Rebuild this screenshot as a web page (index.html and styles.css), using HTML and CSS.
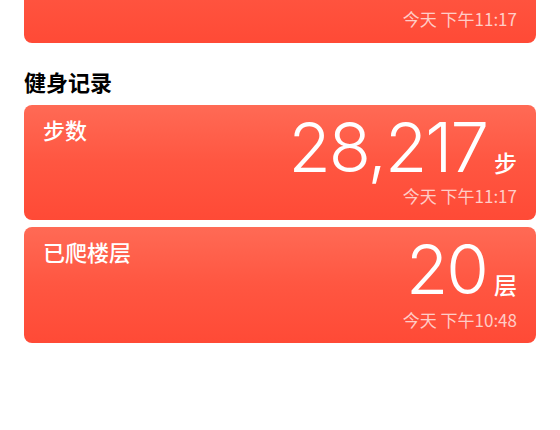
FILE: index.html
```html
<!DOCTYPE html>
<html lang="zh-CN">
<head>
<meta charset="utf-8">
<link rel="stylesheet" href="styles.css">
</head>
<body>
<div class="page">
  <div class="card card-top">
    <div class="time">今天 下午11:17</div>
  </div>

  <h2 class="section-title">健身记录</h2>

  <div class="card">
    <div class="row">
      <div class="title">步数</div>
      <div class="value"><span class="num">28,217</span><span class="unit">步</span></div>
    </div>
    <div class="time">今天 下午11:17</div>
  </div>

  <div class="card card-last">
    <div class="row">
      <div class="title">已爬楼层</div>
      <div class="value"><span class="num">20</span><span class="unit">层</span></div>
    </div>
    <div class="time">今天 下午10:48</div>
  </div>
</div>
</body>
</html>
```

FILE: styles.css
```css
html, body {
  margin: 0;
  padding: 0;
  background: #ffffff;
}

body {
  font-family: "Noto Sans CJK SC", "Noto Sans", sans-serif;
  color: #000;
}

.page {
  padding: 0 24px;
  display: flex;
  flex-direction: column;
}

.card {
  background: linear-gradient(to bottom, #ff6a55 0%, #ff5641 50%, #ff4a36 100%);
  border-radius: 8px;
  color: #fff;
  padding: 10px 19px 13px 19px;
  display: flex;
  flex-direction: column;
  height: 115px;
  box-sizing: border-box;
  margin-bottom: 7px;
}

.card-top {
  margin-top: -72px;
  justify-content: flex-end;
  margin-bottom: 0;
}

.card-last {
  height: 116px;
  padding-bottom: 12px;
}

.section-title {
  margin: 23px 0 9px 0;
  font-size: 22px;
  line-height: 30px;
  font-weight: 700;
}

.row {
  display: flex;
  justify-content: space-between;
  align-items: flex-start;
  flex: 1;
}

.title {
  font-size: 22px;
  line-height: 28px;
  font-weight: 500;
}

.value {
  display: flex;
  align-items: baseline;
  gap: 7px;
  margin-top: 8px;
}

.num {
  font-family: "Inter", "Roboto", sans-serif;
  font-weight: 300;
  font-size: 69px;
  line-height: 48px;
  letter-spacing: -2px;
}

.unit {
  font-size: 23px;
  font-weight: 500;
  line-height: 24px;
}

.time {
  text-align: right;
  font-size: 17px;
  line-height: 22px;
  color: rgba(255, 255, 255, 0.72);
}
```
